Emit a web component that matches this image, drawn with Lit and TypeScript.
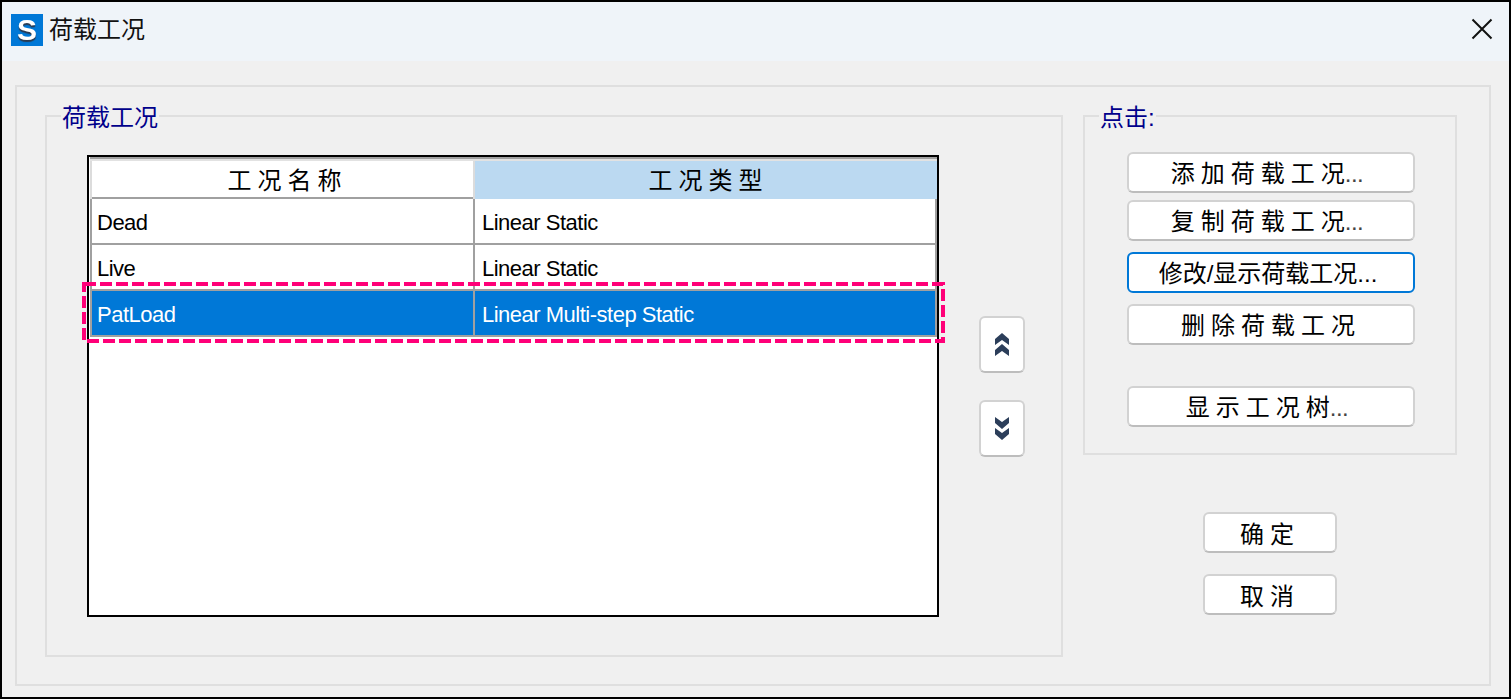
import { LitElement, html, css, svg } from "lit";
import { customElement } from "lit/decorators.js";

@customElement("app-root")
export class AppRoot extends LitElement {
  static styles = css`
    :host { display: block; width: 1511px; height: 699px; font-family: "Liberation Sans", "Noto Sans CJK SC", sans-serif; }
    * { box-sizing: border-box; }
    .window { width: 1511px; height: 699px; border: 2px solid #000; background: #f0f0f0; display: flex; flex-direction: column; }
    .title { height: 59px; flex: none; background: #eff4f9; display: flex; align-items: center; padding: 0 16px 3px 9px; gap: 6px; font-size: 24px; color: #111; }
    .logo { width: 32px; height: 32px; background: #0078d7; color: #fff; display: flex; align-items: center; justify-content: center; font: bold 30px "Liberation Sans", sans-serif; }
    .logo span { display: block; filter: blur(0.6px); text-shadow: 0 2px 1px #2a3a50; }
    .title-text { flex: 1; line-height: 32px; }
    .close { display: block; width: 22px; height: 22px; margin-bottom: 2px; }
    .body { flex: 1; padding: 24px 18px 11px 13px; display: flex; }
    .frame { flex: 1; border: 2px solid #dfdfdf; padding: 28px 27px 27px 28px; display: flex; gap: 20px; }
    .group { position: relative; border: 2px solid #dfdfdf; }
    .legend { position: absolute; top: -15px; left: 14px; background: #f0f0f0; color: #00008b; font-size: 24px; line-height: 32px; padding: 0 1px; }
    .main { width: 1018px; height: 542px; padding: 38px 0 0 40px; display: flex; gap: 40px; }
    .table { position: relative; width: 852px; height: 462px; border: 2px solid #000; background: #fff; padding-left: 1px; flex: none; }
    .rows { border-top: 2px solid #a0a0a0; }
    .row { display: grid; grid-template-columns: 383px 464px; height: 46px; border-bottom: 2px solid #a0a0a0; font-size: 22px; letter-spacing: -0.5px; color: #000; }
    .row > div { display: flex; align-items: center; padding: 4px 0 0 5px; border-left: 2px solid #a0a0a0; }
    .row > div:last-child { border-right: 2px solid #a0a0a0; padding-left: 7px; }
    .row.head { height: 40px; font-size: 24px; letter-spacing: 6px; border-top: 2px solid #e2e2e2; }
    .row.head > div { justify-content: center; padding: 0 0 3px 10px; border-left-color: #dcdcdc; }
    .row.head > div:last-child { background: #bbd9f1; border-right: 0; padding-left: 5px; }
    .row.sel { background: #0078d7; color: #fff; }
    .mark { position: absolute; left: -7px; top: 125px; width: 863px; height: 61px; display: block; pointer-events: none; }
    .arrows { margin-top: 161px; display: flex; flex-direction: column; gap: 27px; }
    .btn { border: 2px solid #d2d2d2; border-bottom-color: #bdbdbd; border-radius: 6px; background: #fff; display: flex; align-items: center; justify-content: center; font-size: 24px; color: #000; }
    .arrow { width: 46px; height: 57px; }
    .arrow svg { display: block; width: 14px; height: 23px; }
    .side { display: flex; flex-direction: column; align-items: center; }
    .actions { width: 374px; height: 340px; padding: 35px 0 0 42px; display: flex; flex-direction: column; }
    .act { width: 288px; height: 41px; letter-spacing: 6px; padding: 0 8px 2px 0; margin-bottom: 7px; }
    .end { letter-spacing: 0; }
    .dots { letter-spacing: -0.5px; color: #444; }
    .act.focus { border-color: #0078d7; letter-spacing: 0; padding-right: 6px; margin-top: 4px; margin-bottom: 11px; }
    .act.del { margin-bottom: 41px; padding-right: 0; }
    .ok { width: 134px; height: 41px; letter-spacing: 6px; }
    .oks { margin-top: 57px; display: flex; flex-direction: column; gap: 21px; }
  `;

  private chevrons(up: boolean) {
    const pts = up
      ? ["7,0 14,6 14,12 7,7 0,12 0,6", "7,11 14,17 14,23 7,18 0,23 0,17"]
      : ["0,0 7,5 14,0 14,6 7,12 0,6", "0,11 7,16 14,11 14,17 7,23 0,17"];
    return svg`<svg viewBox="0 0 14 23"><polygon points=${pts[0]} fill="#2c3e5a"/><polygon points=${pts[1]} fill="#2c3e5a"/></svg>`;
  }

  render() {
    return html`
      <div class="window">
        <div class="title">
          <div class="logo"><span>S</span></div>
          <div class="title-text">荷载工况</div>
          <svg class="close" viewBox="0 0 22 22"><path d="M1.5 1.5 L20.5 20.5 M20.5 1.5 L1.5 20.5" stroke="#111" stroke-width="2" fill="none"/></svg>
        </div>
        <div class="body">
          <div class="frame">
            <div class="group main">
              <div class="legend">荷载工况</div>
              <div class="table">
                <div class="rows">
                  <div class="row head"><div>工况名称</div><div>工况类型</div></div>
                  <div class="row"><div>Dead</div><div>Linear Static</div></div>
                  <div class="row"><div>Live</div><div>Linear Static</div></div>
                  <div class="row sel"><div>PatLoad</div><div>Linear Multi-step Static</div></div>
                </div>
                <svg class="mark" viewBox="0 0 863 61"><rect x="2" y="2" width="859" height="57" fill="none" stroke="#ff0078" stroke-width="4" stroke-dasharray="12 4"/></svg>
              </div>
              <div class="arrows">
                <div class="btn arrow">${this.chevrons(true)}</div>
                <div class="btn arrow">${this.chevrons(false)}</div>
              </div>
            </div>
            <div class="side">
              <div class="group actions">
                <div class="legend">点击:</div>
                <div class="btn act">添加荷载工<span class="end">况<span class="dots">...</span></span></div>
                <div class="btn act">复制荷载工<span class="end">况<span class="dots">...</span></span></div>
                <div class="btn act focus">修改/显示荷载工况...</div>
                <div class="btn act del">删除荷载工况</div>
                <div class="btn act">显示工况<span class="end">树<span class="dots">...</span></span></div>
              </div>
              <div class="oks">
                <div class="btn ok">确定</div>
                <div class="btn ok">取消</div>
              </div>
            </div>
          </div>
        </div>
      </div>
    `;
  }
}
